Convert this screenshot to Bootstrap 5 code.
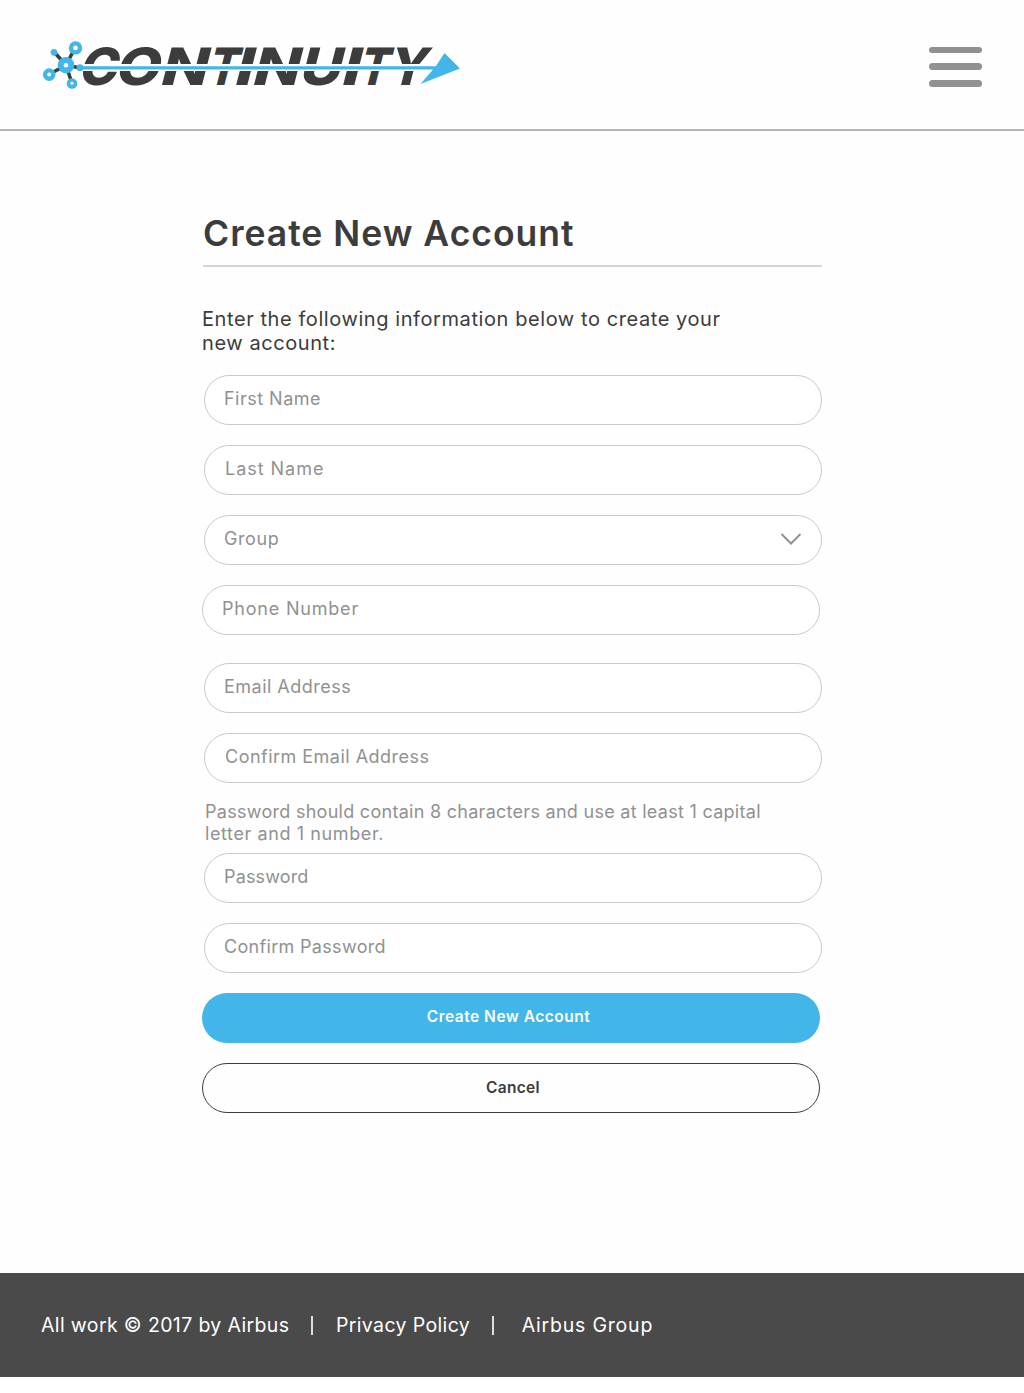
<!DOCTYPE html>
<html lang="en">
<head>
<meta charset="utf-8">
<meta name="viewport" content="width=device-width, initial-scale=1">
<title>Continuity - Create New Account</title>
<link href="https://cdn.jsdelivr.net/npm/bootstrap@5.3.0/dist/css/bootstrap.min.css" rel="stylesheet">
<style>
body{font-family:Inter,"Liberation Sans",sans-serif;color:#3c3c3c;background:#fff}
.page{height:1377px;background:#fefefe}
.topbar{height:131px;border-bottom:2px solid #b4b4b4;padding:0 42px 0 40px}
.wordmark{font-family:Inter,sans-serif;font-weight:800;font-size:51.5px;fill:#3c3c3c}
.burger{width:53px;height:40px;margin-top:4px}
.burger i{height:6.5px;border-radius:4px;background:#919191}
.signup{width:620px;margin-left:202px;padding-top:78px}
.signup h1{height:58px;margin:0 0 0 1px;width:619px;border-bottom:2px solid #d4d4d4;font-size:35.5px;font-weight:600;line-height:50px;letter-spacing:.99px}
.intro{font-size:20px;line-height:24px;margin:40px 0 20px;letter-spacing:.58px}
.field{height:50px;width:618px;border:1px solid #c9c9c9;background:#fff;color:#919191;font-size:18px;padding:0 19px 3px 19px;margin-left:2px}
.field::placeholder{color:#919191;opacity:1}
.hint{color:#919191;font-size:18px;line-height:22px;margin:18px 0 8px 3px;letter-spacing:.28px}
.stack{gap:20px}
.second{margin-top:28px}
.ls-1{letter-spacing:.15px}
.ls-2{letter-spacing:.32px}
.ls-3{letter-spacing:.48px}
.ls-4{letter-spacing:.6px}
.ls-5{letter-spacing:.8px}
.ls-6{letter-spacing:.97px}
.shift{margin-left:0}
.nudge{padding-left:20px}
.action{height:50px;width:618px;font-size:15.5px;font-weight:600;padding:0 0 3px}
.create{background:#42b6e9;color:#fff;letter-spacing:.5px;padding-right:5px}
.cancel{border:1px solid #3c3c3c;color:#3c3c3c;padding:0 0 1px 4px;letter-spacing:.3px}
.foot{height:104px;background:#4a4a4a;color:#fff;font-size:19.5px;padding:2px 0 0 41px;letter-spacing:.37px}
.foot a{color:#fff;text-decoration:none}
.rule{width:1.5px;height:19px;background:#ddd;margin:-2px 23px 0 22px}
.rule-b{margin-right:28px}
</style>
<script src="https://cdn.jsdelivr.net/npm/bootstrap@5.3.0/dist/js/bootstrap.bundle.min.js" defer></script>
</head>
<body>
<div class="page d-flex flex-column">
<header class="topbar d-flex justify-content-between align-items-center flex-shrink-0">
  <a href="#" class="d-block" aria-label="Continuity">
  <svg class="d-block" width="424" height="60" viewBox="40 35 424 60">
    <g class="wordmark" transform="translate(0 84.500) skewX(-14.400)">
      <text x="77" textLength="38.500" lengthAdjust="spacingAndGlyphs">C</text>
      <text x="113.500" textLength="44.500" lengthAdjust="spacingAndGlyphs">O</text>
      <text x="158.500" textLength="47" lengthAdjust="spacingAndGlyphs">N</text>
      <text x="205.500" textLength="30" lengthAdjust="spacingAndGlyphs">T</text>
      <text x="232.500" textLength="18.500" lengthAdjust="spacingAndGlyphs">I</text>
      <text x="250.500" textLength="47" lengthAdjust="spacingAndGlyphs">N</text>
      <text x="297.500" textLength="42" lengthAdjust="spacingAndGlyphs">U</text>
      <text x="339.500" textLength="18.500" lengthAdjust="spacingAndGlyphs">I</text>
      <text x="356.500" textLength="30" lengthAdjust="spacingAndGlyphs">T</text>
      <text x="386" textLength="38.500" lengthAdjust="spacingAndGlyphs">Y</text>
    </g>
    <path d="M78 64H440V71H78z" fill="#fefefe"/>
    <path d="M66 65L54 52M66 65L75 48M66 65L49 74.500M66 65L72 83.500M66 65L80 68" stroke="#3c3c3c" stroke-width="3.500"/>
    <g fill="#42b6e9"><path d="M80 66.200H438V69.400H80zM444.500 53L460 68.500L420.500 84L436 66z"/>
    <circle cx="54" cy="52.300" r="3.400"/><circle cx="80" cy="67.700" r="3.500"/><circle cx="66" cy="65.200" r="8.300"/><circle cx="75.500" cy="47.900" r="6.700"/><circle cx="49.200" cy="74.600" r="6.300"/><circle cx="72" cy="83.500" r="5.300"/></g>
    <g fill="#fff"><circle cx="66" cy="65.300" r="2.300"/><circle cx="75.500" cy="47.900" r="2.300"/><circle cx="49.200" cy="74.500" r="2"/><circle cx="72" cy="83.200" r="1.500"/></g>
  </svg></a>
  <button class="burger btn p-0 border-0 d-flex flex-column justify-content-between" aria-label="Menu"><i class="w-100"></i><i class="w-100"></i><i class="w-100"></i></button>
</header>
<main class="flex-grow-1">
  <form class="signup d-flex flex-column">
    <h1>Create New Account</h1>
    <p class="intro">Enter the following information below to create your<br>new account:</p>
    <div class="stack d-flex flex-column">
      <input class="field ls-3 form-control rounded-pill" placeholder="First Name">
      <input class="field nudge ls-6 form-control rounded-pill" placeholder="Last Name">
      <button type="button" class="field ls-4 btn rounded-pill d-flex align-items-center justify-content-between text-start"><span>Group</span>
        <svg width="22" height="14" viewBox="0 0 22 14" fill="none" stroke="#919191" stroke-width="2"><path d="M1.500 2L11 11.500L20.500 2"/></svg></button>
      <input class="field shift ls-5 form-control rounded-pill" placeholder="Phone Number">
    </div>
    <div class="stack second d-flex flex-column">
      <input class="field ls-3 form-control rounded-pill" placeholder="Email Address">
      <input class="field nudge ls-3 form-control rounded-pill" placeholder="Confirm Email Address">
    </div>
    <p class="hint">Password should contain 8 characters and use at least 1 capital<br><span class="ls-4">letter and 1 number.</span></p>
    <div class="stack d-flex flex-column">
      <input class="field ls-1 form-control rounded-pill" placeholder="Password">
      <input class="field ls-2 form-control rounded-pill" placeholder="Confirm Password">
      <button type="button" class="action create btn rounded-pill">Create New Account</button>
      <button type="button" class="action cancel btn rounded-pill">Cancel</button>
    </div>
  </form>
</main>
<footer class="foot d-flex align-items-center">
  <span>All work © 2017 by Airbus</span><span class="rule"></span><a href="#">Privacy Policy</a><span class="rule rule-b"></span><a href="#" class="ls-5">Airbus Group</a>
</footer>
</div>
</body>
</html>
